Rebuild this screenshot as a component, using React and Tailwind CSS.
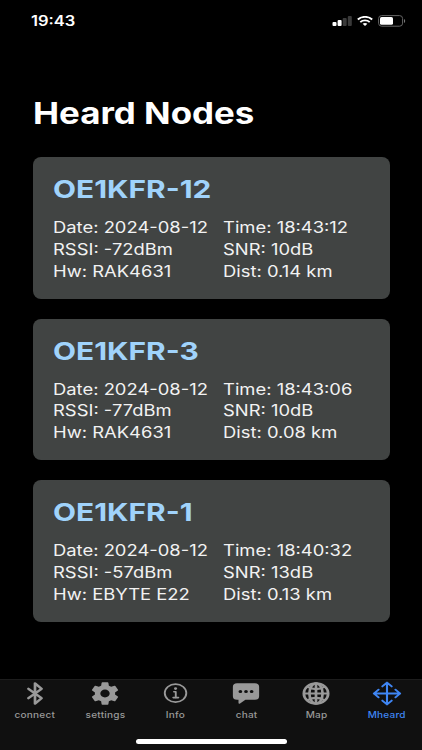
import React from "react";
import {
  IoBluetoothOutline,
  IoChatboxEllipses,
  IoGlobeSharp,
  IoInformationCircleOutline,
  IoMoveOutline,
  IoSettingsSharp,
} from "react-icons/io5";

const nodes = [
  { call: "OE1KFR-12", date: "2024-08-12", time: "18:43:12", rssi: -72, snr: 10, hw: "RAK4631", dist: "0.14" },
  { call: "OE1KFR-3", date: "2024-08-12", time: "18:43:06", rssi: -77, snr: 10, hw: "RAK4631", dist: "0.08" },
  { call: "OE1KFR-1", date: "2024-08-12", time: "18:40:32", rssi: -57, snr: 13, hw: "EBYTE E22", dist: "0.13" },
];

const tabs = [
  { label: "connect", Icon: IoBluetoothOutline, weight: "[&_path]:[stroke-width:46px]" },
  { label: "settings", Icon: IoSettingsSharp, weight: "" },
  { label: "Info", Icon: IoInformationCircleOutline, weight: "" },
  { label: "chat", Icon: IoChatboxEllipses, weight: "" },
  { label: "Map", Icon: IoGlobeSharp, weight: "[&_path]:[stroke-width:46px]" },
  { label: "Mheard", Icon: IoMoveOutline, weight: "[&_path]:[stroke-width:36px]", active: true },
];

function StatusBar() {
  return (
    <div className="h-[42px] flex items-center justify-between pl-[31px] pr-[16.5px]">
      <span className="inline-block origin-left scale-x-[1.18] text-[14px] font-semibold leading-none text-white">
        19:43
      </span>
      <div className="flex items-center gap-[5px]">
        <svg className="w-[20px] h-[10px]" viewBox="0 0 20 10">
          <rect x="0.5" y="6" width="4" height="4" rx="1" fill="#fff" />
          <rect x="5.6" y="4" width="4" height="6" rx="1" fill="#fff" />
          <rect x="10.7" y="2" width="4" height="8" rx="1" fill="#3a3a3a" />
          <rect x="15.8" y="0" width="4" height="10" rx="1" fill="#3a3a3a" />
        </svg>
        <svg className="w-[16px] h-[10px]" viewBox="0 0 16 10" fill="none" stroke="#fff" strokeWidth="1.9">
          <path d="M0.8 3.5C4.6 0 11.4 0 15.2 3.5" />
          <path d="M3.3 6.1C5.8 3.8 10.2 3.8 12.7 6.1" />
          <path d="M5.6 7.7C7 6.6 9 6.6 10.4 7.7L8 10Z" fill="#fff" stroke="none" />
        </svg>
        <svg className="w-[28px] h-[12px]" viewBox="0 0 28 12">
          <rect x="0.6" y="0.6" width="24" height="10.6" rx="3" fill="none" stroke="#666" strokeWidth="1" />
          <rect x="2" y="2" width="13" height="7.8" rx="1.6" fill="#fff" />
          <path d="M26 4v4c1.6-.6 1.6-3.4 0-4Z" fill="#777" />
        </svg>
      </div>
    </div>
  );
}

function Field({ children }) {
  return (
    <div className="h-[21.8px] flex items-center">
      <span className="inline-block origin-left scale-x-[1.187] whitespace-nowrap">{children}</span>
    </div>
  );
}

function NodeCard({ node }) {
  return (
    <div className="h-[141.5px] rounded-lg bg-[#414443] pl-[20.5px] pt-[17px]">
      <h2 className="h-[30px] flex items-center text-[24.5px] font-bold text-[#a0d3fb]">
        <span className="inline-block origin-left scale-x-[1.22] whitespace-nowrap">{node.call}</span>
      </h2>
      <div className="mt-[12.5px] grid grid-cols-[170px_1fr] text-[15.5px] text-[#f2f2f2]">
        <Field>Date: {node.date}</Field>
        <Field>Time: {node.time}</Field>
        <Field>RSSI: {node.rssi}dBm</Field>
        <Field>SNR: {node.snr}dB</Field>
        <Field>Hw: {node.hw}</Field>
        <Field>Dist: {node.dist} km</Field>
      </div>
    </div>
  );
}

function TabBar() {
  return (
    <nav className="h-[71px] flex flex-col border-t border-[#1d1d1d] bg-[#101010]">
      <div className="grid grid-cols-6">
        {tabs.map(({ label, Icon, weight, active }) => (
          <div
            key={label}
            className={`flex flex-col items-center pt-[1px] ${active ? "text-[#3f86f4]" : "text-[#999999]"}`}
          >
            <Icon className={`w-[30px] h-[25px] ${weight}`} preserveAspectRatio="none" />
            <span className="mt-[3px] inline-block scale-x-[1.14] text-[8.8px] font-medium leading-[12px] tracking-[0.2px]">
              {label}
            </span>
          </div>
        ))}
      </div>
      <div className="mt-auto mb-[6px] mx-auto w-[151px] h-[5px] rounded-full bg-white"></div>
    </nav>
  );
}

function App() {
  return (
    <div className="w-[422px] h-[750px] flex flex-col overflow-hidden bg-black font-['Inter','Liberation_Sans',sans-serif]">
      <StatusBar />
      <main className="flex-1 pl-[32.5px] pr-[32.5px] pt-[51.4px]">
        <h1 className="h-10 flex items-center text-[30px] font-bold text-white">
          <span className="inline-block origin-left scale-x-[1.163] whitespace-nowrap">Heard Nodes</span>
        </h1>
        <div className="mt-[24px] flex flex-col gap-5">
          {nodes.map((node) => (
            <NodeCard key={node.call} node={node} />
          ))}
        </div>
      </main>
      <TabBar />
    </div>
  );
}

export default App;
